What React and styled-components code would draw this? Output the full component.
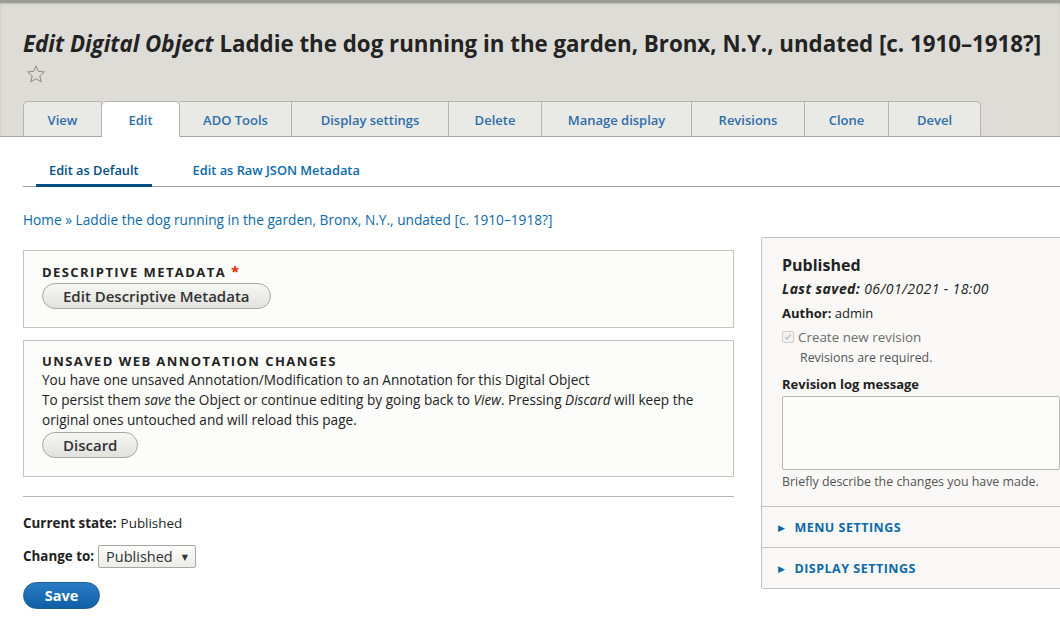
import React from "react";
import styled, { createGlobalStyle } from "styled-components";

const GlobalStyle = createGlobalStyle`
  html, body {
    margin: 0;
    padding: 0;
    background: #fff;
    overflow: hidden;
  }
  body {
    font-family: "Open Sans", "DejaVu Sans", sans-serif;
    color: #222330;
    font-size: 13px;
  }
`;

const tabs = [
  { label: "View", width: 79 },
  { label: "Edit", width: 78, active: true },
  { label: "ADO Tools", width: 112 },
  { label: "Display settings", width: 157 },
  { label: "Delete", width: 93 },
  { label: "Manage display", width: 150 },
  { label: "Revisions", width: 113 },
  { label: "Clone", width: 84 },
  { label: "Devel", width: 92 },
];

const App = () => {
  return (
    <>
      <GlobalStyle />
      <Header>
        <Title>
          <em>Edit Digital Object</em> Laddie the dog running in the garden, Bronx, N.Y., undated [c. 1910–1918?]
        </Title>
        <Star viewBox="0 0 20 20">
          <path d="M10 1.8l2.4 5.6 6 .5-4.6 4 1.4 5.9L10 14.7 4.8 17.8l1.4-5.9-4.6-4 6-.5z" />
        </Star>
        <Tabs>
          {tabs.map((t, i) => (
            <Tab
              key={t.label}
              $active={t.active}
              $first={i === 0}
              $last={i === tabs.length - 1}
              style={{ width: t.width }}
            >
              {t.label}
            </Tab>
          ))}
        </Tabs>
      </Header>

      <SubTabs>
        <SubTab $active>Edit as Default</SubTab>
        <SubTab>Edit as Raw JSON Metadata</SubTab>
      </SubTabs>

      <Breadcrumb>
        <a>Home</a> » <a>Laddie the dog running in the garden, Bronx, N.Y., undated [c. 1910–1918?]</a>
      </Breadcrumb>

      <Layout>
        <Main>
          <Fieldset>
            <Legend>
              Descriptive Metadata <Req>*</Req>
            </Legend>
            <PillButton>Edit Descriptive Metadata</PillButton>
          </Fieldset>

          <Fieldset>
            <Legend>Unsaved Web Annotation Changes</Legend>
            <Para>
              You have one unsaved Annotation/Modification to an Annotation for this Digital Object
            </Para>
            <Para>
              To persist them <em>save</em> the Object or continue editing by going back to <em>View</em>. Pressing{" "}
              <em>Discard</em> will keep the original ones untouched and will reload this page.
            </Para>
            <PillButton>Discard</PillButton>
          </Fieldset>

          <Rule />

          <StateRow>
            <b>Current state:</b> Published
          </StateRow>
          <StateRow>
            <b>Change to:</b>
            <Select>
              Published <Caret>▼</Caret>
            </Select>
          </StateRow>
          <SaveButton>Save</SaveButton>
        </Main>

        <Sidebar>
          <Meta>
            <MetaTitle>Published</MetaTitle>
            <SavedLine>
              <b>Last saved:</b> 06/01/2021 - 18:00
            </SavedLine>
            <MetaLine>
              <b>Author:</b> admin
            </MetaLine>
            <CheckRow>
              <Check>
                <svg viewBox="0 0 10 10" width="8" height="8">
                  <path d="M1.5 5.2l2.2 2.3L8.5 2" fill="none" stroke="#b5b5b5" strokeWidth="1.3" />
                </svg>
              </Check>
              Create new revision
            </CheckRow>
            <Hint $indent>Revisions are required.</Hint>
            <FieldLabel>Revision log message</FieldLabel>
            <Textarea />
            <Hint>Briefly describe the changes you have made.</Hint>
          </Meta>
          <Details>
            <Arrow>▶</Arrow>Menu settings
          </Details>
          <Details $last>
            <Arrow>▶</Arrow>Display settings
          </Details>
        </Sidebar>
      </Layout>
    </>
  );
};

const Header = styled.header`
  background: #dedcd6;
  border-top: 3px solid #9c9c98;
  box-shadow: inset 0 1px 2px rgba(0, 0, 0, 0.15);
  border-bottom: 1px solid #a6a6a6;
  padding: 27px 23px 0;
`;

const Title = styled.h1`
  margin: 0;
  font-size: 22.3px;
  font-weight: 700;
  color: #232323;
  line-height: 28px;
  white-space: nowrap;
  em {
    font-weight: 700;
  }
`;

const Star = styled.svg`
  display: block;
  width: 20px;
  height: 20px;
  margin: 6px 0 0 3px;
  fill: none;
  stroke: #8a8a86;
  stroke-width: 1;
`;

const Tabs = styled.nav`
  display: flex;
  margin-top: 17px;
  margin-bottom: -1px;
`;

const Tab = styled.a`
  box-sizing: border-box;
  height: 36px;
  display: flex;
  align-items: center;
  justify-content: center;
  font-size: 13px;
  font-weight: 600;
  color: #2e6ea8;
  background: ${(p) => (p.$active ? "#fff" : "#e9e9e6")};
  border: 1px solid #b4b4b0;
  border-left-width: ${(p) => (p.$first ? "1px" : "0")};
  border-bottom-color: ${(p) => (p.$active ? "#fff" : "#a6a6a6")};
  border-radius: ${(p) =>
    p.$active ? "5px 5px 0 0" : p.$first ? "5px 0 0 0" : p.$last ? "0 5px 0 0" : "0"};
  padding-top: 1px;
`;

const SubTabs = styled.nav`
  display: flex;
  margin: 0 0 0 23px;
  padding-top: 24px;
  border-bottom: 1px solid #a6a6a6;
`;

const SubTab = styled.a`
  padding: 0 13px 5px;
  font-size: 12.8px;
  font-weight: 600;
  color: ${(p) => (p.$active ? "#004f80" : "#0c6aa8")};
  line-height: 18px;
  margin-left: ${(p) => (p.$active ? "13px" : "28px")};
  border-bottom: 3px solid ${(p) => (p.$active ? "#004f80" : "transparent")};
  margin-bottom: -1px;
`;

const Breadcrumb = styled.div`
  margin: 23px 0 0 23px;
  font-size: 13.7px;
  color: #0c6aa8;
  line-height: 20px;
  a {
    color: #0c6aa8;
  }
`;

const Layout = styled.div`
  display: grid;
  grid-template-columns: 711px 320px;
  column-gap: 27px;
  margin: 0 0 0 23px;
  align-items: start;
`;

const Main = styled.main`
  padding-top: 20px;
`;

const Fieldset = styled.section`
  background: #fcfcfa;
  border: 1px solid #c3c3bf;
  padding: 11px 18px 18px;
  margin-bottom: 12px;
`;

const Legend = styled.div`
  font-size: 13px;
  font-weight: 700;
  text-transform: uppercase;
  letter-spacing: 0.11em;
  color: #232323;
  line-height: 18px;
`;

const Req = styled.span`
  color: #e62600;
  font-size: 15px;
`;

const Para = styled.p`
  margin: 0;
  font-size: 13.6px;
  line-height: 20px;
  color: #222;
`;

const PillButton = styled.button`
  display: inline-block;
  margin-top: 2px;
  height: 26px;
  padding: 0 20px;
  border: 1px solid #a6a6a6;
  border-radius: 20px;
  background: linear-gradient(to bottom, #f6f6f3, #e2e2dd);
  font-family: inherit;
  font-size: 15px;
  font-weight: 600;
  color: #333;
  line-height: 24px;
`;

const Rule = styled.hr`
  border: 0;
  border-top: 1px solid #b5b5b1;
  margin: 19px 0 14px;
`;

const StateRow = styled.div`
  display: flex;
  align-items: center;
  gap: 4px;
  font-size: 13.4px;
  color: #222;
  min-height: 24px;
  margin-bottom: 9px;
  b {
    font-weight: 700;
  }
`;

const Select = styled.div`
  display: flex;
  align-items: center;
  gap: 9px;
  height: 23px;
  box-sizing: border-box;
  padding: 0 7px 0 7px;
  border: 1px solid #a6a6a6;
  border-radius: 2px;
  background: linear-gradient(to bottom, #fbfbfa, #ecece9);
  font-size: 14.5px;
  color: #333;
`;

const Caret = styled.span`
  font-size: 8px;
  color: #333;
`;

const SaveButton = styled.button`
  margin-top: 5px;
  width: 77px;
  height: 27px;
  border: 1px solid #1e5c90;
  border-radius: 20px;
  background: linear-gradient(to bottom, #2a7cc4, #0f5fa6);
  color: #fff;
  font-family: inherit;
  font-size: 14.5px;
  font-weight: 700;
`;

const Sidebar = styled.aside`
  margin-top: 7px;
  background: #f9f8f6;
  border: 1px solid #c3c3bf;
  border-radius: 2px;
`;

const Meta = styled.div`
  padding: 15px 20px 15px;
  border-bottom: 1px solid #c3c3bf;
`;

const MetaTitle = styled.div`
  font-size: 16px;
  font-weight: 700;
  color: #222;
  line-height: 24px;
`;

const MetaLine = styled.div`
  font-size: 13px;
  line-height: 24px;
  color: #222;
  b {
    font-weight: 700;
  }
`;

const SavedLine = styled(MetaLine)`
  font-style: italic;
  font-size: 14px;
  letter-spacing: 0.4px;
`;

const CheckRow = styled.div`
  display: flex;
  align-items: center;
  gap: 4px;
  font-size: 13.4px;
  color: #6d6d6d;
  line-height: 24px;
`;

const Check = styled.span`
  width: 10px;
  height: 10px;
  border: 1px solid #cfcfcb;
  border-radius: 2px;
  background: #f2f2f0;
  display: flex;
  align-items: center;
  justify-content: center;
`;

const Hint = styled.div`
  font-size: 12.4px;
  line-height: 18px;
  color: #555;
  padding-left: ${(p) => (p.$indent ? "18px" : "0")};
`;

const FieldLabel = styled.div`
  margin-top: 8px;
  font-size: 13px;
  font-weight: 700;
  line-height: 18px;
  color: #222;
`;

const Textarea = styled.div`
  height: 72px;
  margin: 3px 0 3px;
  background: #fcfcfa;
  border: 1px solid #b8b8b4;
  border-radius: 2px;
`;

const Details = styled.div`
  height: 40px;
  display: flex;
  align-items: center;
  padding-left: 16px;
  font-size: 12.5px;
  font-weight: 700;
  text-transform: uppercase;
  letter-spacing: 0.04em;
  color: #0c6aa8;
  border-bottom: ${(p) => (p.$last ? "0" : "1px solid #c3c3bf")};
`;

const Arrow = styled.span`
  font-size: 9px;
  margin-right: 9px;
`;

export default App;
